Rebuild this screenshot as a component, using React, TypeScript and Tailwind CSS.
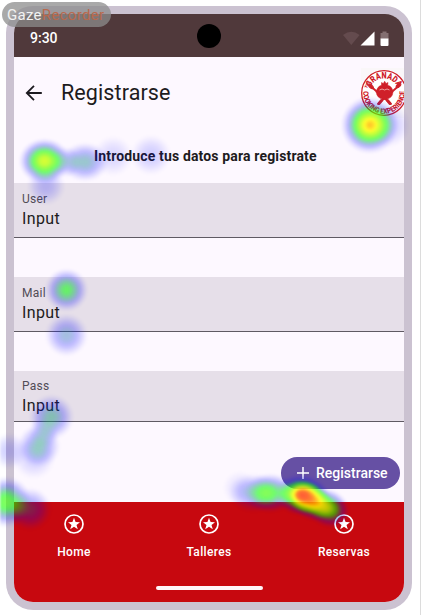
import React from 'react';

type Spot = { x: number; y: number; r: number; a: number; ry?: number; rot?: number };

const spots: Spot[] = [
  { x: 44.5, y: 161, r: 26, a: 0.8, ry: 23 },
  { x: 66, y: 162, r: 17, a: 0.22, ry: 16 },
  { x: 85, y: 162, r: 24, a: 0.4, ry: 20 },
  { x: 113, y: 156, r: 21, a: 0.13 },
  { x: 151, y: 155, r: 21, a: 0.17 },
  { x: 46, y: 186, r: 20, a: 0.22 },
  { x: 66.5, y: 290, r: 22, a: 0.56 },
  { x: 66.5, y: 335, r: 22, a: 0.36 },
  { x: 51.5, y: 417, r: 23, a: 0.43 },
  { x: 39, y: 446, r: 22, a: 0.36 },
  { x: 34, y: 458, r: 22, a: 0.15 },
  { x: 44, y: 433, r: 16, a: 0.18 },
  { x: 9, y: 451, r: 19, a: 0.18 },
  { x: 6, y: 502, r: 26, a: 0.62 },
  { x: 30, y: 509, r: 22, a: 0.34 },
  { x: 369.5, y: 125, r: 29, a: 0.9 },
  { x: 388, y: 125, r: 23, a: 0.2 },
  { x: 270, y: 493, r: 26, a: 0.56, ry: 20 },
  { x: 254, y: 493, r: 26, a: 0.3, ry: 20 },
  { x: 240, y: 488, r: 18, a: 0.1 },
  { x: 302, y: 495, r: 27, a: 0.97, ry: 21, rot: 8 },
  { x: 312, y: 501, r: 24, a: 0.75, ry: 19, rot: 32 },
  { x: 328, y: 508, r: 23, a: 0.7, ry: 19, rot: 30 },
];

function Heatmap() {
  return (
    <svg className="pointer-events-none absolute inset-0" width="434" height="615" viewBox="0 0 434 615">
      <defs>
        <radialGradient id="spot">
          <stop offset="0" stopColor="#000" stopOpacity="1" />
          <stop offset="0.2" stopColor="#000" stopOpacity="0.94" />
          <stop offset="0.4" stopColor="#000" stopOpacity="0.77" />
          <stop offset="0.6" stopColor="#000" stopOpacity="0.5" />
          <stop offset="0.75" stopColor="#000" stopOpacity="0.27" />
          <stop offset="0.88" stopColor="#000" stopOpacity="0.09" />
          <stop offset="1" stopColor="#000" stopOpacity="0" />
        </radialGradient>
        <filter id="ramp" filterUnits="userSpaceOnUse" x="0" y="0" width="434" height="615" colorInterpolationFilters="sRGB">
          <feColorMatrix type="matrix" values="0 0 0 1 0  0 0 0 1 0  0 0 0 1 0  0 0 0 1 0" />
          <feComponentTransfer>
            <feFuncR type="table" tableValues="0 0 0 0 0 0 0 0 0 0 0 0 .17 .33 .5 .67 .83 1 1 1 1" />
            <feFuncG type="table" tableValues="0 0 0 0 0 0 .17 .33 .5 .67 .83 1 1 1 1 1 1 1 .72 .38 .2" />
            <feFuncB type="table" tableValues="1 1 1 1 1 1 .83 .67 .5 .33 .17 0 0 0 0 0 0 0 0 0.05 0.1" />
            <feFuncA type="table" tableValues="0 .1 .2 .3 .4 .5 .62 .72 .8 .84 .86" />
          </feComponentTransfer>
          <feGaussianBlur stdDeviation="0.8" />
        </filter>
      </defs>
      <g filter="url(#ramp)">
        {spots.map((s, i) => (
          <ellipse key={i} cx={s.x} cy={s.y} rx={s.r} ry={s.ry ?? s.r} fill="url(#spot)" opacity={s.a}
            transform={`rotate(${s.rot ?? 0} ${s.x} ${s.y})`} />
        ))}
      </g>
    </svg>
  );
}

function Logo() {
  return (
    <svg className="h-[50px] w-[43px] shrink-0" viewBox="0 0 43 50">
      <rect width="43" height="50" fill="#faf7f9" />
      <defs>
        <path id="arcTop" d="M8 25.5 A15 15 0 0 1 38 25.5" />
        <path id="arcBottom" d="M2.4 22 A20.8 20.8 0 1 0 43.6 22" />
      </defs>
      <circle cx="23" cy="25" r="22.3" fill="#fff" stroke="#cf2029" strokeWidth="1.3" />
      <g fill="#cf2029" fontFamily="Roboto, sans-serif" fontWeight="900">
        <text fontSize="9"><textPath href="#arcTop" startOffset="50%" textAnchor="middle" textLength="34" lengthAdjust="spacingAndGlyphs">GRANADA</textPath></text>
        <text fontSize="7.4"><textPath href="#arcBottom" startOffset="50%" textAnchor="middle" textLength="68" lengthAdjust="spacingAndGlyphs">COOKING EXPERIENCE</textPath></text>
        <text fontSize="4" transform="translate(6 20.5) rotate(-65)">THE</text>
      </g>
      <g stroke="#cf2029" strokeLinecap="round" fill="#cf2029">
        <path d="M10 18.5 L30 36 M37 18.5 L17 36" strokeWidth="1.8" />
        <path d="M18 35.5 L20.5 32.5 M29 35.5 L26.5 32.5" strokeWidth="3" />
        <ellipse cx="10" cy="18.5" rx="1.5" ry="2.8" transform="rotate(-48 10 18.5)" />
        <ellipse cx="37.5" cy="17.5" rx="1.5" ry="2.8" transform="rotate(48 37.5 17.5)" />
        <path d="M15.2 24 Q16 18.5 20.5 17.3 L20.5 14.5 L22.3 15.5 L23.7 13.2 L25 15.5 L27 14.5 L26.7 17.3 Q31.5 18.5 32 24 Q31.5 31 23.6 31.5 Q15.8 31 15.2 24Z" strokeWidth=".5" />
      </g>
      <path d="M18.5 22 Q21 20 23.6 22 Q26 20 28.5 22" fill="none" stroke="#f0a0a0" strokeWidth="1" />
    </svg>
  );
}

function Field({ label, box }: { label: string; box: string }) {
  return (
    <div className={`flex flex-col border-b border-[#5f5a63] bg-[#e6dfe9] pl-2 ${box}`}>
      <span className="h-[16px] text-[12px] leading-[16px] tracking-[0.25px] text-[#514c56]">{label}</span>
      <span className="mt-0.5 h-5 text-[16px] leading-5 tracking-[0.35px] text-[#1d1b20]">Input</span>
    </div>
  );
}

function NavItem({ label }: { label: string }) {
  return (
    <div className="flex w-[120px] flex-col items-center">
      <svg className="h-[22px] w-[22px]" viewBox="0 0 22 22">
        <circle cx="11" cy="11" r="9" fill="none" stroke="#fff" strokeWidth="1.7" />
        <path d="M11 4.8 L12.6 9 L17 9.2 L13.5 12 L14.8 16.3 L11 13.8 L7.2 16.3 L8.5 12 L5 9.2 L9.4 9Z" fill="#fff" />
      </svg>
      <span className="mt-[9px] text-[12px] font-medium leading-4 tracking-[0.35px] text-white">{label}</span>
    </div>
  );
}

export default function App() {
  return (
    <div className="relative h-[615px] w-[434px] overflow-hidden bg-white font-['Roboto',sans-serif]">
      <div className="flex h-full w-[421px] border-r border-[#dcdcdc] pl-1.5 pt-1.5">
        <div className="h-[604px] w-[406px] rounded-[27px] bg-[#cbc2d1] p-2">
          <div className="flex h-[588px] w-[390px] flex-col overflow-hidden rounded-[19px] bg-[#fdf8ff]">
            <div className="flex h-[43px] shrink-0 items-center bg-[#50393b] pl-4 pr-[15px] pt-1">
              <span className="w-[167px] text-[14px] font-medium leading-5 text-white">9:30</span>
              <span className="-mt-1 h-6 w-6 rounded-full bg-black" />
              <svg className="ml-auto mt-[3px] h-4 w-[46px]" viewBox="0 0 46 16">
                <path d="M0 4 Q8.3 -2.5 16.6 4 L8.3 14Z" fill="#644b4e" />
                <path d="M17.5 14.5 L31.5 .5 V14.5Z" fill="#fff" />
                <path d="M37.5 8 V2 H39.5 V.5 H43.5 V2 H45.5 V8Z" fill="#846f71" />
                <path d="M37.5 7.5 H45.5 V14 Q45.5 15 44.5 15 H38.5 Q37.5 15 37.5 14Z" fill="#fff" />
              </svg>
            </div>
            <div className="flex h-[72px] shrink-0 items-center">
              <svg className="ml-[11px] h-[18px] w-[18px]" viewBox="0 0 18 18" fill="none" stroke="#1d1b20" strokeWidth="1.8">
                <path d="M16.8 9 H2 M9 1.8 L1.8 9 L9 16.2" />
              </svg>
              <h1 className="ml-[18px] flex-1 text-[21.5px] leading-7 tracking-[0.1px] text-[#1d1b20]">Registrarse</h1>
              <Logo />
            </div>
            <p className="mt-[17px] h-5 shrink-0 pl-20 text-[14px] font-bold leading-5 tracking-[0.15px] text-[#1d1b20]">Introduce tus datos para registrate</p>
            <div className="mt-[17px] flex shrink-0 flex-col">
              <Field label="User" box="h-[55px] pt-2" />
              <Field label="Mail" box="mt-[39px] h-[55px] pt-2" />
              <Field label="Pass" box="mt-[39px] h-[51px] pt-[7px]" />
            </div>
            <button className="ml-auto mr-1 mt-[35px] flex h-[32px] w-[119px] shrink-0 items-center rounded-full bg-[#6650a4] pl-4 text-white">
              <svg className="h-3 w-3" viewBox="0 0 12 12" stroke="#fff" strokeWidth="1.5"><path d="M0 6 H12 M6 0 V12" /></svg>
              <span className="ml-[7px] text-[14px] font-medium leading-5">Registrarse</span>
            </button>
            <div className="mt-auto flex h-[100px] shrink-0 flex-col items-center bg-[#c7080f] pt-[11px]">
              <div className="flex w-full justify-between">
                <NavItem label="Home" />
                <NavItem label="Talleres" />
                <NavItem label="Reservas" />
              </div>
              <div className="mb-3 mt-auto h-1 w-[107px] rounded-full bg-[#fff5f8]" />
            </div>
          </div>
        </div>
      </div>
      <Heatmap />
      <div className="absolute left-0.5 top-0.5 flex h-[25px] w-[109px] items-center rounded-full bg-[#8c8c8c]/75 pl-[5px] text-[15px] leading-5 tracking-[0.3px]">
        <span className="text-[#f2f2f2]">Gaze</span><span className="text-[#b9694d]">Recorder</span>
      </div>
    </div>
  );
}
